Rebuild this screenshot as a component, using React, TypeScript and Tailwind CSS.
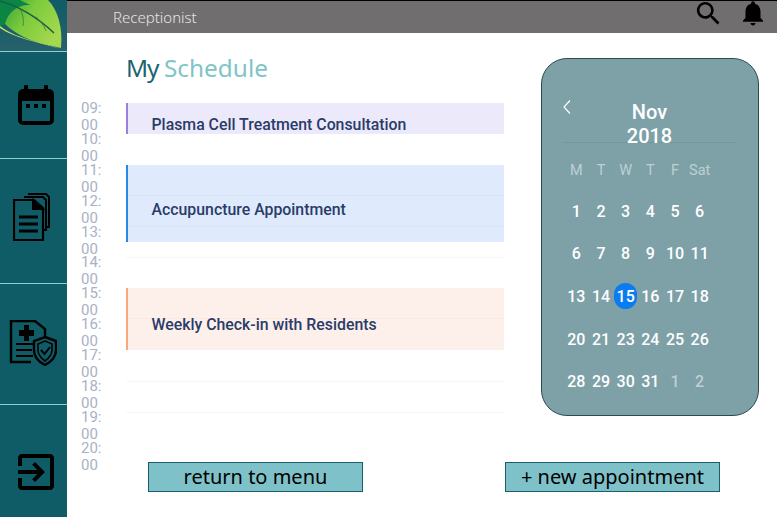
const hours = ["09:00", "10:00", "11:00", "12:00", "13:00", "14:00", "15:00", "16:00", "17:00", "18:00", "19:00", "20:00"];
const weekdays = ["M", "T", "W", "T", "F", "Sat"];
const weeks = [
  ["1", "2", "3", "4", "5", "6"],
  ["6", "7", "8", "9", "10", "11"],
  ["13", "14", "15", "16", "17", "18"],
  ["20", "21", "23", "24", "25", "26"],
  ["28", "29", "30", "31", "1", "2"],
];

function Leaf() {
  return (
    <svg width="67" height="51" viewBox="0 0 67 51">
      <defs>
        <linearGradient id="leafFill" x1="0" y1="0" x2="1" y2="0.6">
          <stop offset="0" stopColor="#3aa538" />
          <stop offset="0.45" stopColor="#7ccb3c" />
          <stop offset="1" stopColor="#a5d84e" />
        </linearGradient>
        <linearGradient id="shade" x1="0" y1="0" x2="0" y2="1">
          <stop offset="0" stopColor="#0f5c67" />
          <stop offset="1" stopColor="#27606b" />
        </linearGradient>
      </defs>
      <rect width="67" height="51" fill="url(#shade)" />
      <path d="M0 0H22L30 5C18 4 8 12 5 24L0 27Z" fill="#0b8543" />
      <path d="M5 24C8 12 18 4 30 5L20 0H48C58 10 63 28 61 48C46 44 24 42 5 24Z" fill="url(#leafFill)" />
      <path d="M0 28C14 38 38 42 61 49C46 43 18 40 0 26Z" fill="#bfe36a" />
      <path d="M0 1C18 6 38 18 54 33" stroke="#1d5a4e" strokeWidth="1.4" fill="none" />
      <path d="M20 9C23 14 24 20 23 26M36 17C40 21 44 25 46 31" stroke="#3b7c3a" strokeWidth="0.8" fill="none" />
    </svg>
  );
}

function CalendarIcon() {
  return (
    <svg width="36" height="40" viewBox="0 0 36 40" fill="none">
      <rect x="2" y="6" width="32" height="32" rx="3" stroke="#000" strokeWidth="4" />
      <rect x="2" y="5" width="32" height="11" fill="#000" />
      <rect x="6" y="0" width="4" height="8" rx="1" fill="#000" />
      <rect x="26" y="0" width="4" height="8" rx="1" fill="#000" />
      <rect x="8" y="19" width="4" height="4" fill="#000" />
      <rect x="16" y="19" width="4" height="4" fill="#000" />
      <rect x="24" y="19" width="4" height="4" fill="#000" />
    </svg>
  );
}

function DocsIcon() {
  return (
    <svg width="38" height="49" viewBox="0 0 38 49" fill="none" stroke="#000" strokeWidth="2">
      <path d="M15 1H33L36 4V34H33" />
      <path d="M11 4H30L33 7V37H30" />
      <path d="M1 7H21L30 15V47H1Z" fill="#0f5c67" strokeWidth="2.2" />
      <path d="M20 7V16H30Z" fill="#000" />
      <path d="M6 24H25M6 31H25M6 38H25" strokeWidth="3.2" />
    </svg>
  );
}

function RecordIcon() {
  return (
    <svg width="48" height="46" viewBox="0 0 48 46" fill="none" stroke="#000">
      <path d="M22 42H2V1H26L36 9V16" strokeWidth="2.4" />
      <path d="M15 5V10H10V16H15V21H20V16H25V10H20V5Z" fill="#000" stroke="none" />
      <path d="M7 24H25M7 30H23M7 36H24" strokeWidth="2" />
      <path d="M36 17L47 21V30C47 37 42 42 36 45C30 42 25 37 25 30V21Z" fill="#0f5c67" strokeWidth="2.4" />
      <path d="M36 21L43 24V30C43 35 40 38 36 41C32 38 29 35 29 30V24Z" strokeWidth="1.6" />
      <path d="M32 30L35.5 34L41 27" strokeWidth="2" />
    </svg>
  );
}

function ExitIcon() {
  return (
    <svg width="36" height="36" viewBox="3 3 18 18" fill="#000">
      <path d="M10.09 15.59L11.5 17l5-5-5-5-1.41 1.41L12.67 11H3v2h9.67l-2.58 2.59zM19 3H5c-1.11 0-2 .9-2 2v4h2V5h14v14H5v-4H3v4c0 1.1.89 2 2 2h14c1.1 0 2-.9 2-2V5c0-1.1-.9-2-2-2z" />
    </svg>
  );
}

export default function App() {
  return (
    <div className="flex h-[517px] w-[777px] overflow-hidden bg-white font-['Roboto',sans-serif]">
      {/* sidebar */}
      <aside className="flex w-[67px] shrink-0 flex-col bg-[#0f5c67]">
        <div className="h-[52px] border-b border-[#8fd0d0]">
          <Leaf />
        </div>
        <div className="flex h-[107px] items-center justify-center border-b border-[#8fd0d0] pl-[5px]">
          <CalendarIcon />
        </div>
        <div className="flex h-[125px] items-center justify-center border-b border-[#8fd0d0] pb-[7px] pr-[3px]">
          <DocsIcon />
        </div>
        <div className="flex h-[121px] items-center justify-center border-b border-[#8fd0d0] pb-[2px] pr-[1px]">
          <RecordIcon />
        </div>
        <div className="flex flex-1 items-center justify-center pl-[5px] pt-[22px]">
          <ExitIcon />
        </div>
      </aside>

      <div className="flex min-w-0 flex-1 flex-col">
        {/* top bar */}
        <header className="flex h-[33px] items-center border-t border-black bg-[#706e6e] pl-[46px] pr-[9px]">
          <span className="flex-1 font-['Noto_Sans',sans-serif] text-[15px] font-light text-[#e6e6e6]">Receptionist</span>
          <svg width="31" height="31" viewBox="0 0 24 24" fill="#000" className="mb-[7px] mr-[14px]">
            <path d="M15.5 14h-.79l-.28-.27C15.41 12.59 16 11.11 16 9.5 16 5.91 13.09 3 9.5 3S3 5.91 3 9.5 5.91 16 9.5 16c1.61 0 3.09-.59 4.23-1.57l.27.28v.79l5 4.99L20.49 19l-4.99-5zm-6 0C7.01 14 5 11.99 5 9.5S7.01 5 9.5 5 14 7.01 14 9.5 11.99 14 9.5 14z" />
          </svg>
          <svg width="30" height="30" viewBox="0 0 24 24" fill="#000" className="mb-[8.5px]">
            <path d="M12 22c1.1 0 2-.9 2-2h-4c0 1.1.89 2 2 2zm6-6v-5c0-3.07-1.64-5.64-4.5-6.32V4c0-.83-.67-1.5-1.5-1.5s-1.5.67-1.5 1.5v.68C7.63 5.36 6 7.92 6 11v5l-2 2v1h16v-1l-2-2z" />
          </svg>
        </header>

        <main className="flex flex-1 pl-[14px]">
          {/* hours */}
          <div className="w-[45px] shrink-0 pt-[67px]">
            {hours.map((h) => (
              <div key={h} className="h-[30.9px] w-[24px] break-all text-[15px] leading-[17px] text-[#a8b2c6]">
                {h}
              </div>
            ))}
          </div>

          <div className="flex flex-1 flex-col">
            <div className="flex">
              <section className="w-[378px] shrink-0">
                <h1 className="mt-[17px] h-[53px] font-['Noto_Sans',sans-serif] text-[24.4px] leading-[36px] text-[#1d6370]">
                  <span className="tracking-[-1px]">My </span>
                  <span className="text-[#7fc4c6]">Schedule</span>
                </h1>
                <div className="flex h-[31px] items-end border-l-2 border-[#9b7fdc] bg-[#ece9fb] pl-[23.5px] text-[15.85px] font-medium leading-[18px] text-[#2a3c68]">
                  Plasma Cell Treatment Consultation
                </div>
                <div className="h-[31px]" />
                <div className="relative flex h-[77px] flex-col justify-center border-l-2 border-[#2589e8] bg-[#dfebfd] pl-[23.5px] pt-[12px] text-[15.85px] font-medium leading-[20px] text-[#2a3c68]">
                  <div className="absolute inset-x-0 top-[30px] border-t border-[#d8e5f8]" />
                  <div className="absolute inset-x-0 top-[61px] border-t border-[#d8e5f8]" />
                  <span className="relative">Accupuncture Appointment</span>
                </div>
                <div className="h-[16px] border-b border-[#f7f7f7]" />
                <div className="h-[30px]" />
                <div className="relative flex h-[62px] items-center border-l-2 border-[#f9a77f] bg-[#fdf0eb] pl-[23.5px] pt-[12px] text-[15.85px] font-medium leading-[20px] text-[#2a3c68]">
                  <div className="absolute inset-x-0 top-[30px] border-t border-[#fae9e3]" />
                  <span className="relative">Weekly Check-in with Residents</span>
                </div>
                <div className="h-[32px] border-b border-[#f7f7f7]" />
                <div className="h-[31px] border-b border-[#f7f7f7]" />
              </section>

              {/* calendar */}
              <section className="ml-[37px] mt-[25px] h-[358px] w-[218px] shrink-0 rounded-[26px] border border-[#2c4a50] bg-[#7ea1a8] pl-[21px] pr-[22px] pt-[37px]">
                <div className="relative h-[47px] border-b border-[#74959b] text-center text-[20px] font-medium leading-[24px] text-white">
                  <svg width="10" height="16" viewBox="0 0 10 16" fill="none" stroke="#fff" strokeWidth="1.2" className="absolute -left-[1px] top-[3px]">
                    <path d="M8 1.5L2 8l6 6.5" />
                  </svg>
                  <div className="pt-[4px]">Nov</div>
                  <div>2018</div>
                </div>
                <div className="ml-[1px] mt-[18px] grid w-[148px] grid-cols-6 text-center text-[14.5px] leading-[20px] text-[#bdd0d3]">
                  {weekdays.map((d, i) => (
                    <span key={i}>{d}</span>
                  ))}
                </div>
                <div className="ml-[1px] mt-[9.5px] w-[148px]">
                  {weeks.map((week, w) => (
                    <div key={w} className="grid h-[42.6px] grid-cols-6 items-center text-center text-[16px] font-medium text-white">
                      {week.map((d, i) => {
                        const muted = w === 4 && i > 3;
                        const today = d === "15";
                        return (
                          <span key={i} className="relative flex justify-center">
                            {today && <span className="absolute left-[1px] top-[-2px] h-[26px] w-[23px] rounded-full bg-[#0a7cf0]" />}
                            <span className={muted ? "relative text-[#bdd0d3]" : "relative"}>{d}</span>
                          </span>
                        );
                      })}
                    </div>
                  ))}
                </div>
              </section>
            </div>

            {/* actions */}
            <div className="mt-[46px] flex pl-[22px] font-['Noto_Sans',sans-serif] text-[20px] text-black">
              <button className="h-[30px] w-[215px] border border-[#17606c] bg-[#7fc1c8] leading-[28px]">return to menu</button>
              <button className="ml-[142px] h-[30px] w-[215px] border border-[#17606c] bg-[#7fc1c8] leading-[28px]">+ new appointment</button>
            </div>
          </div>
        </main>
      </div>
    </div>
  );
}
